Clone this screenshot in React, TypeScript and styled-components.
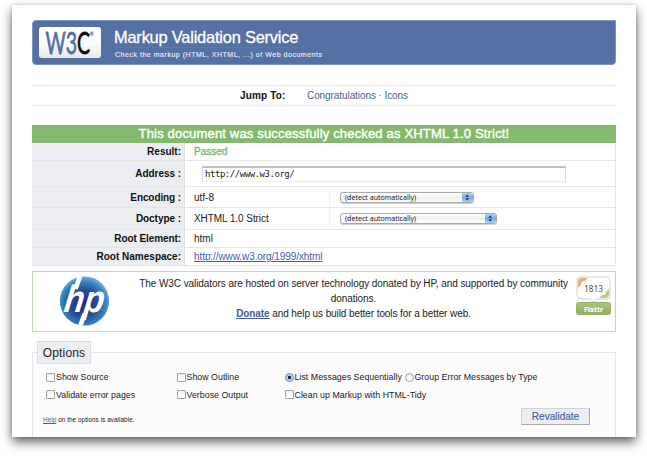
import React from "react";
import styled, { createGlobalStyle } from "styled-components";

const Global = createGlobalStyle`
  * { box-sizing: border-box; }
  body { margin: 0; background: #fff; overflow: hidden; }
  #root { width: 647px; height: 456px; }
`;

const Desktop = styled.div`
  width: 647px;
  height: 456px;
  padding: 5px 11px 19px 12px;
  overflow: hidden;
  font-family: "Liberation Sans", Arial, sans-serif;
  font-size: 10px;
  color: #222;
`;

const Sheet = styled.main`
  height: 432px;
  padding: 15px 20px 0;
  background: #fff;
  box-shadow: 0 5px 10px rgba(0, 0, 0, 0.62), 0 0 3px rgba(0, 0, 0, 0.12);
  clip-path: inset(-5px -11px -19px -12px);
  display: flex;
  flex-direction: column;
`;

const Banner = styled.header`
  height: 45px;
  display: flex;
  padding: 6px 6px 0;
  background: #5570a2;
  border: 1px solid #7f95bf;
  border-radius: 4px 0 4px 4px;
  flex: none;
`;

const LogoTile = styled.div`
  width: 62px;
  height: 31px;
  border-radius: 3px;
  background: linear-gradient(#fff 45%, #e9e9e9);
  svg { display: block; overflow: visible; }
`;

const Titles = styled.div`
  margin-left: 13px;
  white-space: nowrap;
`;

const Title = styled.h1`
  margin: 0;
  font-size: 16.4px;
  font-weight: 400;
  line-height: 20px;
  color: #fff;
  -webkit-text-stroke: 0.3px #fff;
  letter-spacing: -0.2px;
  width: 184px;
  border-bottom: 1px solid #5f78a8;
`;

const Subtitle = styled.p`
  margin: 2px 0 0 1px;
  font-size: 7px;
  line-height: 9px;
  letter-spacing: 0.53px;
  color: #e6ebf5;
  -webkit-text-stroke: 0.15px #e6ebf5;
`;

const JumpBar = styled.nav`
  height: 21px;
  margin-top: 20px;
  flex: none;
  display: flex;
  border: solid #ececec;
  border-width: 1px 0;
  line-height: 19px;
  white-space: nowrap;
  color: #4a5f9a;
  letter-spacing: -0.08px;
`;

const JumpLabel = styled.b`
  width: 275px;
  padding-left: 208px;
  color: #111;
  letter-spacing: 0.15px;
`;

const Verdict = styled.h2`
  margin: 19px 0 0;
  height: 18px;
  flex: none;
  background: #84b970;
  color: #fff;
  font-size: 13px;
  font-weight: 400;
  line-height: 18px;
  text-align: center;
  white-space: nowrap;
  -webkit-text-stroke: 0.4px #fff;
  letter-spacing: 0.17px;
`;

const Row = styled.div<{ $h: number }>`
  height: ${(p) => p.$h}px;
  flex: none;
  display: flex;
  align-items: stretch;
  border: solid #e6e6e6;
  border-width: 0 1px 1px 0;
`;

const Term = styled.div<{ $ls?: number; $gap?: number }>`
  width: 153px;
  flex: none;
  display: flex;
  align-items: center;
  justify-content: flex-end;
  padding: 0 3px ${(p) => p.$gap ?? 0}px 0;
  background: #ecedf0;
  border-right: 1px solid #dcdde2;
  font-weight: 700;
  color: #111;
  white-space: nowrap;
  letter-spacing: ${(p) => p.$ls ?? 0}px;
`;

const Value = styled.div<{ $w?: number; $ls?: number; $color?: string }>`
  width: ${(p) => (p.$w ? p.$w + "px" : "auto")};
  display: flex;
  align-items: center;
  padding-left: 9px;
  white-space: nowrap;
  letter-spacing: ${(p) => p.$ls ?? 0}px;
  color: ${(p) => p.$color ?? "#222"};
  -webkit-text-stroke: ${(p) => (p.$color ? "0.3px " + p.$color : "0")};
  border-right: ${(p) => (p.$w ? "1px solid #eee" : "0")};
`;

const Link = styled.a<{ $bold?: boolean }>`
  color: #43609f;
  text-decoration: underline;
  text-underline-offset: 1px;
  font-weight: ${(p) => (p.$bold ? 700 : 400)};
`;

const AddressBox = styled.div`
  width: 364px;
  height: 16px;
  margin: 1px 0 0 8px;
  padding-left: 2px;
  border: 1px solid #d9d9d9;
  border-top: 2px solid #c2c2c2;
  border-bottom-color: #ececec;
  background: #fff;
  font-family: "DejaVu Sans Mono", monospace;
  font-size: 9px;
  line-height: 13px;
  letter-spacing: -0.46px;
`;

const Select = styled.div<{ $w: number }>`
  width: ${(p) => p.$w}px;
  height: 11px;
  margin-left: 10px;
  align-self: center;
  display: flex;
  align-items: center;
  justify-content: space-between;
  padding-left: 4px;
  border: 1px solid #a9a9a9;
  border-radius: 3px;
  box-shadow: 0 1px 1px rgba(0, 0, 0, 0.2);
  background: linear-gradient(#fff, #f1f1f1 50%, #fdfdfd);
  font-family: "Open Sans", "Noto Sans", sans-serif;
  font-weight: 500;
  font-size: 7.1px;
  line-height: 9px;
  white-space: nowrap;
  overflow: hidden;
  color: #111;
  svg { display: block; flex: none; }
`;

const Sponsor = styled.section`
  height: 61px;
  margin-top: 5px;
  flex: none;
  display: flex;
  border: 1px solid #b9dcb0;
`;

const HpHolder = styled.div`
  width: 76px;
  padding: 4px 0 0 26px;
  flex: none;
  svg { display: block; }
`;

const SponsorText = styled.div`
  width: 489px;
  padding-top: 4px;
  line-height: 15px;
  display: flex;
  flex-direction: column;
  align-items: center;
  white-space: nowrap;
  flex: none;
`;

const Line = styled.span<{ $ls: number }>`
  letter-spacing: ${(p) => p.$ls}px;
`;

const Flattr = styled.div`
  margin: 4px 0 0 -22px;
  width: 36px;
  flex: none;
  svg { display: block; }
`;

const Options = styled.section`
  margin-top: 9px;
  flex: 1;
  min-height: 0;
  display: flex;
  flex-direction: column;
`;

const Legend = styled.h3`
  width: 54px;
  height: 23px;
  margin: 0 0 -12px 5px;
  z-index: 1;
  flex: none;
  border: 1px solid #dcdddf;
  background: #edeef1;
  font-size: 12px;
  font-weight: 400;
  line-height: 23px;
  text-align: center;
  letter-spacing: 0.15px;
  white-space: nowrap;
`;

const OptionsPanel = styled.div`
  flex: 1;
  border: 1px solid #e6e6e6;
  border-bottom: 0;
  background: #fcfcfc;
  padding: 15px 0 0 13px;
`;

const Choices = styled.div`
  display: grid;
  grid-template-columns: 130.5px 108px 120px auto;
  grid-auto-rows: 17.5px;
  font-size: 8.8px;
`;

const Choice = styled.label<{ $span?: boolean }>`
  height: 18px;
  display: flex;
  align-items: center;
  white-space: nowrap;
  letter-spacing: 0.03px;
  grid-column: ${(p) => (p.$span ? "span 2" : "auto")};
`;

const Box = styled.i<{ $round?: boolean; $on?: boolean }>`
  width: 9px;
  height: 9px;
  margin-right: 1px;
  flex: none;
  border: 1px solid ${(p) => (p.$on ? "#6585b8" : "#a3a3a3")};
  border-radius: ${(p) => (p.$round ? "50%" : "1px")};
  background: ${(p) =>
    p.$on
      ? "radial-gradient(circle, #16233f 0 1.3px, #a9cbf5 2px, #dcebfd)"
      : "linear-gradient(#f1f1f1, #fff)"};
`;

const Foot = styled.div`
  display: flex;
  justify-content: space-between;
  padding: 5px 25px 0 0;
  margin-left: -3px;
`;

const Help = styled.small`
  padding-top: 6px;
  font-size: 6.4px;
  line-height: 12px;
  letter-spacing: 0.04px;
  white-space: nowrap;
`;

const Button = styled.button`
  width: 69px;
  height: 17px;
  padding: 0;
  border: 1px solid #d2d3d8;
  border-right-color: #aaa;
  border-bottom-color: #aaa;
  background: #edeef1;
  color: #48609d;
  font: 10px/14px "Liberation Sans", Arial, sans-serif;
  -webkit-text-stroke: 0.15px #48609d;
`;

const W3CLogo = () => (
  <svg width="62" height="31" viewBox="0 0 62 31" fontFamily="Lato, sans-serif">
    <g transform="translate(6.5 27) scale(0.62 1)">
      <text fontSize="31.5" fill="#4f70ab" stroke="#4f70ab" strokeWidth="0.8" textLength="72" lengthAdjust="spacingAndGlyphs">
        W3<tspan fill="#111" stroke="#111">C</tspan>
      </text>
    </g>
    <text x="50.500" y="9" fontSize="5.5" fill="#111">®</text>
  </svg>
);

const HpLogo = () => (
  <svg width="51" height="51" viewBox="0 0 51 51">
    <defs>
      <radialGradient id="hpDisc" cx="0.48" cy="0.55" r="0.53">
        <stop offset="0" stopColor="#28277f" />
        <stop offset="0.5" stopColor="#274893" />
        <stop offset="0.82" stopColor="#347fbd" />
        <stop offset="1" stopColor="#63aadb" />
      </radialGradient>
      <clipPath id="hpClip"><circle cx="25.5" cy="25" r="24.8" /></clipPath>
    </defs>
    <g clipPath="url(#hpClip)">
      <circle cx="25.5" cy="25" r="24.8" fill="url(#hpDisc)" />
      <text transform="translate(4 36) skewX(-8)" fontFamily="Liberation Sans" fontStyle="italic" fontWeight="700" fontSize="38" fill="#fff" textLength="40" lengthAdjust="spacingAndGlyphs">hp</text>
      <g stroke="#fff" strokeWidth="4.6">
        <path d="M21.500 -1 L16.500 13" />
        <path d="M25.500 38 L20.500 52" />
      </g>
    </g>
  </svg>
);

const FlattrBadge = () => (
  <svg width="36" height="40" viewBox="0 0 36 40">
    <defs>
      <linearGradient id="flattrGreen" x1="0" y1="0" x2="0" y2="1">
        <stop offset="0" stopColor="#abc778" />
        <stop offset="1" stopColor="#91ad5b" />
      </linearGradient>
    </defs>
    <path d="M4 1 H31 Q34 1 34 4 V20 Q34 23 31 23 H20.5 L17.5 26 L14.500 23 H4 Q1 23 1 20 V4 Q1 1 4 1Z" fill="#fff" stroke="#d0d0d0" />
    <path d="M2 12 V6 Q2 2 6 2 H12 L9 5 Q5 5 5 9Z" fill="#e8b080" />
    <path d="M33 13 V18 Q33 22 29 22 H23 L26 19 Q30 19 30 16Z" fill="#b9cf86" />
    <text x="8" y="15.500" fontFamily="Noto Sans" fontSize="9" fill="#555" textLength="19" lengthAdjust="spacingAndGlyphs">1813</text>
    <rect x="0.5" y="26.500" width="34" height="12" rx="2" fill="url(#flattrGreen)" stroke="#98b267" />
    <text x="8" y="35.500" fontFamily="Noto Sans" fontWeight="800" fontSize="7.5" fill="#fff" textLength="19" lengthAdjust="spacingAndGlyphs">Flattr</text>
  </svg>
);

const Stepper = () => (
  <svg width="11" height="11" viewBox="0 0 11 11">
    <defs>
      <linearGradient id="stepBlue" x1="0" y1="0" x2="0" y2="1">
        <stop offset="0" stopColor="#c4dcfa" />
        <stop offset="0.5" stopColor="#79a9e8" />
        <stop offset="1" stopColor="#b3dafc" />
      </linearGradient>
    </defs>
    <rect width="11" height="11" fill="url(#stepBlue)" />
    <path d="M3.500 4.700 L5.200 2.200 L6.900 4.700Z M3.500 6.300 L5.200 8.800 L6.900 6.300Z" fill="#1d2d4d" />
  </svg>
);

export default function App() {
  return (
    <>
      <Global />
      <Desktop>
        <Sheet>
          <Banner>
            <LogoTile><W3CLogo /></LogoTile>
            <Titles>
              <Title>Markup Validation Service</Title>
              <Subtitle>Check the markup (HTML, XHTML, ...) of Web documents</Subtitle>
            </Titles>
          </Banner>

          <JumpBar>
            <JumpLabel>Jump To:</JumpLabel>
            <span>Congratulations · Icons</span>
          </JumpBar>

          <Verdict>This document was successfully checked as XHTML 1.0 Strict!</Verdict>
          <Row $h={18}>
            <Term>Result:</Term>
            <Value $color="#7cb56b">Passed</Value>
          </Row>
          <Row $h={26}>
            <Term $gap={1} $ls={-0.05}>Address :</Term>
            <Value><AddressBox>http://www.w3.org/</AddressBox></Value>
          </Row>
          <Row $h={21}>
            <Term $ls={-0.1}>Encoding :</Term>
            <Value $w={145}>utf-8</Value>
            <Select $w={134}>(detect automatically)<Stepper /></Select>
          </Row>
          <Row $h={22}>
            <Term $ls={-0.05}>Doctype :</Term>
            <Value $w={145} $ls={-0.07}>XHTML 1.0 Strict</Value>
            <Select $w={157}>(detect automatically)<Stepper /></Select>
          </Row>
          <Row $h={18}>
            <Term $ls={-0.08}>Root Element:</Term>
            <Value>html</Value>
          </Row>
          <Row $h={18}>
            <Term>Root Namespace:</Term>
            <Value $ls={-0.08}><Link>http://www.w3.org/1999/xhtml</Link></Value>
          </Row>

          <Sponsor>
            <HpHolder><HpLogo /></HpHolder>
            <SponsorText>
              <Line $ls={-0.07}>The W3C validators are hosted on server technology donated by HP, and supported by community</Line>
              <Line $ls={-0.07}>donations.</Line>
              <Line $ls={-0.09}><Link $bold>Donate</Link> and help us build better tools for a better web.</Line>
            </SponsorText>
            <Flattr><FlattrBadge /></Flattr>
          </Sponsor>

          <Options>
            <Legend>Options</Legend>
            <OptionsPanel>
              <Choices>
                <Choice><Box />Show Source</Choice>
                <Choice><Box />Show Outline</Choice>
                <Choice><Box $round $on />List Messages Sequentially</Choice>
                <Choice><Box $round />Group Error Messages by Type</Choice>
                <Choice><Box />Validate error pages</Choice>
                <Choice><Box />Verbose Output</Choice>
                <Choice $span><Box />Clean up Markup with HTML-Tidy</Choice>
              </Choices>
              <Foot>
                <Help><Link>Help</Link> on the options is available.</Help>
                <Button>Revalidate</Button>
              </Foot>
            </OptionsPanel>
          </Options>
        </Sheet>
      </Desktop>
    </>
  );
}
